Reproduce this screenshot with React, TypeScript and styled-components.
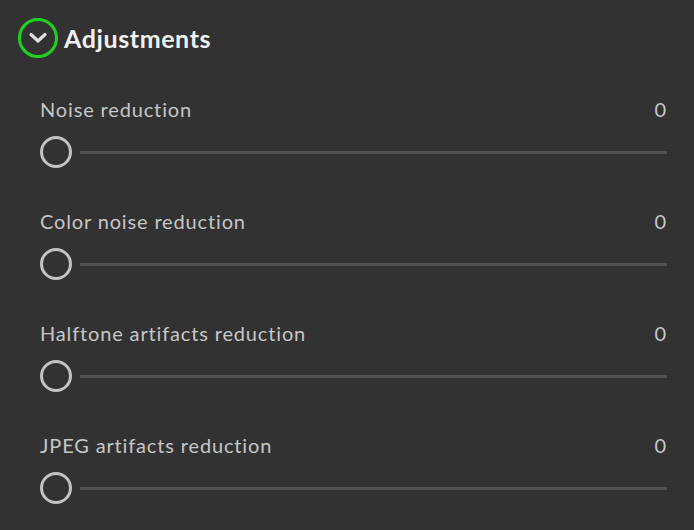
import React from "react";
import styled, { createGlobalStyle } from "styled-components";

const Global = createGlobalStyle`
  html, body { margin: 0; padding: 0; background: #323232; }
  body { font-family: Lato, "Open Sans", sans-serif; }
`;

const Panel = styled.div`
  width: 694px;
  height: 530px;
  box-sizing: border-box;
  padding: 18px 27px 0 18px;
  background: #323232;
  overflow: hidden;
`;

const Header = styled.div`
  display: flex;
  align-items: center;
  gap: 6px;
  height: 40px;
`;

const Toggle = styled.div`
  width: 40px;
  height: 40px;
  box-sizing: border-box;
  border: 3px solid #1fd21f;
  border-radius: 50%;
  display: flex;
  align-items: center;
  justify-content: center;
`;

const Title = styled.h2`
  margin: 0;
  font-size: 25px;
  font-weight: 700;
  letter-spacing: 0.6px;
  color: #f2f2f2;
  line-height: 30px;
`;

const List = styled.div`
  display: flex;
  flex-direction: column;
  gap: 41px;
  padding: 39px 0 0 22px;
`;

const Row = styled.div`
  display: flex;
  flex-direction: column;
  gap: 15px;
`;

const LabelLine = styled.div`
  display: flex;
  justify-content: space-between;
  font-size: 20px;
  line-height: 24px;
  letter-spacing: 0.85px;
  color: #c6c6c6;
`;

const Value = styled.span`
  letter-spacing: 0;
  margin-right: 1px;
`;

const SliderLine = styled.div`
  display: flex;
  align-items: center;
  gap: 8px;
  height: 32px;
`;

const Knob = styled.div`
  width: 32px;
  height: 32px;
  box-sizing: border-box;
  border: 3.5px solid #c4c4c4;
  border-radius: 50%;
  flex: none;
`;

const Track = styled.div`
  flex: 1;
  height: 3px;
  background: #515151;
`;

const items = [
  "Noise reduction",
  "Color noise reduction",
  "Halftone artifacts reduction",
  "JPEG artifacts reduction",
];

export default function App() {
  return (
    <>
      <Global />
      <Panel>
        <Header>
          <Toggle>
            <svg width="20" height="14" viewBox="0 0 20 14">
              <path d="M3 3.5 L10 10 L17 3.5" fill="none" stroke="#e0e0e0" strokeWidth="3.2" strokeLinecap="round" strokeLinejoin="round" />
            </svg>
          </Toggle>
          <Title>Adjustments</Title>
        </Header>
        <List>
          {items.map((label) => (
            <Row key={label}>
              <LabelLine>
                <span>{label}</span>
                <Value>0</Value>
              </LabelLine>
              <SliderLine>
                <Knob />
                <Track />
              </SliderLine>
            </Row>
          ))}
        </List>
      </Panel>
    </>
  );
}
